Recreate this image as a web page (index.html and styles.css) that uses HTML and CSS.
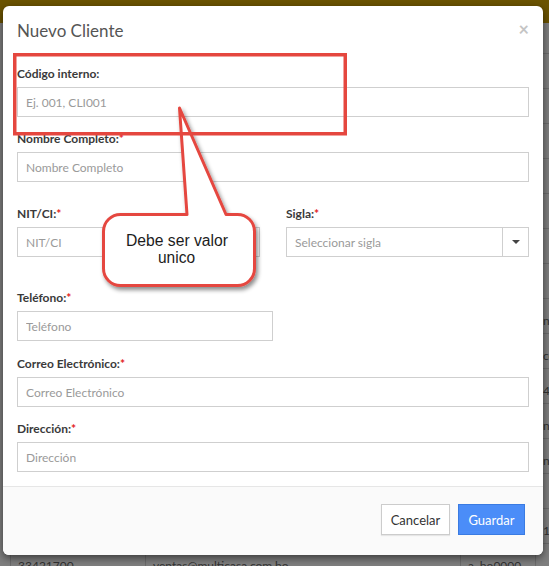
FILE: index.html
```html
<!DOCTYPE html>
<html lang="es">
<head>
<meta charset="utf-8">
<title>Nuevo Cliente</title>
<link rel="stylesheet" href="styles.css">
</head>
<body>
<div class="page">
  <div class="topbar"></div>
  <div class="content">
    <table class="list">
      <colgroup><col class="c1"><col class="c2"><col class="c3"><col class="c4"></colgroup>
      <tbody>
        <tr><td>22345100</td><td>info@empresa.com.bo</td><td>Activo</td><td></td></tr>
        <tr><td>22345101</td><td>info@empresa.com.bo</td><td>Activo</td><td></td></tr>
        <tr><td>22345102</td><td>info@empresa.com.bo</td><td>Activo</td><td></td></tr>
        <tr><td>22345103</td><td>info@empresa.com.bo</td><td>Activo</td><td></td></tr>
        <tr><td>22345104</td><td>info@empresa.com.bo</td><td>Activo</td><td></td></tr>
        <tr><td>22345105</td><td>info@empresa.com.bo</td><td>Activo</td><td></td></tr>
        <tr><td>22345106</td><td>info@empresa.com.bo</td><td>Activo</td><td></td></tr>
        <tr><td>22345107</td><td>info@empresa.com.bo</td><td>Activo</td><td>nit</td></tr>
        <tr><td>22345108</td><td>info@empresa.com.bo</td><td>Activo</td><td>co</td></tr>
        <tr><td>22345109</td><td>info@empresa.com.bo</td><td>Activo</td><td>4:</td></tr>
        <tr><td>22345110</td><td>info@empresa.com.bo</td><td>Activo</td><td>nt</td></tr>
        <tr><td>22345111</td><td>info@empresa.com.bo</td><td>Activo</td><td>nit</td></tr>
        <tr><td>22345112</td><td>info@empresa.com.bo</td><td>Activo</td><td></td></tr>
        <tr><td>22345113</td><td>info@empresa.com.bo</td><td>Activo</td><td>1</td></tr>
        <tr><td>33421700</td><td>ventas@multicasa.com.bo</td><td>a. bo0000</td><td></td></tr>
      </tbody>
    </table>
  </div>
</div>
<div class="backdrop"></div>

<div class="modal">
  <div class="modal-header">
    <h4 class="modal-title">Nuevo Cliente</h4>
    <span class="close">×</span>
  </div>
  <div class="modal-body">
    <div class="group g-codigo">
      <label>Código interno:</label>
      <input class="field" type="text" placeholder="Ej. 001, CLI001">
    </div>
    <div class="group g-nombre">
      <label>Nombre Completo:<span class="req">*</span></label>
      <input class="field" type="text" placeholder="Nombre Completo">
    </div>
    <div class="row">
      <div class="group">
        <label>NIT/CI:<span class="req">*</span></label>
        <input class="field" type="text" placeholder="NIT/CI">
      </div>
      <div class="group">
        <label>Sigla:<span class="req">*</span></label>
        <div class="select">
          <span class="select-text">Seleccionar sigla</span>
          <span class="select-btn"><span class="caret"></span></span>
        </div>
      </div>
    </div>
    <div class="group g-telefono">
      <label>Teléfono:<span class="req">*</span></label>
      <input class="field" type="text" placeholder="Teléfono">
    </div>
    <div class="group g-correo">
      <label>Correo Electrónico:<span class="req">*</span></label>
      <input class="field" type="text" placeholder="Correo Electrónico">
    </div>
    <div class="group g-direccion">
      <label>Dirección:<span class="req">*</span></label>
      <input class="field" type="text" placeholder="Dirección">
    </div>
  </div>
  <div class="modal-footer">
    <button class="btn btn-default" type="button">Cancelar</button>
    <button class="btn btn-primary" type="button">Guardar</button>
  </div>
</div>

<svg class="annot" width="549" height="566" viewBox="0 0 549 566" xmlns="http://www.w3.org/2000/svg">
  <defs>
    <filter id="sh" x="-20%" y="-20%" width="140%" height="140%">
      <feDropShadow dx="2" dy="3" stdDeviation="2" flood-color="#000" flood-opacity="0.45"/>
    </filter>
  </defs>
  <path class="callout" filter="url(#sh)" d="M187 214.5 L179.5 108 L226 214.5 H237 A17 17 0 0 1 254.5 231.5 V268.5 A17 17 0 0 1 237 285.5 H121 A17 17 0 0 1 103.5 268.5 V231.5 A17 17 0 0 1 121 214.5 Z"/>
  <rect class="box" x="14.75" y="54.75" width="330.5" height="79"/>
  <text class="ctext" x="177" y="246" text-anchor="middle" textLength="102" lengthAdjust="spacingAndGlyphs">Debe ser valor</text>
  <text class="ctext" x="176.5" y="263" text-anchor="middle" textLength="37" lengthAdjust="spacingAndGlyphs">unico</text>
</svg>
</body>
</html>
```

FILE: styles.css
```css
* { box-sizing: border-box; }
html, body { margin: 0; padding: 0; }
body {
  width: 549px;
  height: 566px;
  overflow: hidden;
  position: relative;
  background: #fff;
  font-family: Lato, "Open Sans", sans-serif;
}

/* underlying page */
.topbar { height: 23px; background: #d6a600; }
.content { padding-top: 30px; }
.list {
  border-collapse: collapse;
  table-layout: fixed;
  width: 625px;
  margin-left: 10px;
}
.c1 { width: 135px; }
.c2 { width: 315px; }
.c3 { width: 75px; }
.c4 { width: 100px; }
.list td {
  height: 35px;
  border-top: 1px solid #d8d8d8;
  border-left: 1px solid #d8d8d8;
  padding: 15px 7px 0;
  font-size: 12px;
  line-height: 14px;
  color: #666;
  vertical-align: top;
  white-space: nowrap;
  overflow: hidden;
}
.backdrop {
  position: absolute;
  inset: 0;
  background: rgba(0, 0, 0, 0.5);
}

/* modal */
.modal {
  position: absolute;
  left: 3px;
  top: 6px;
  width: 540px;
  background: #fff;
  border-radius: 6px;
  box-shadow: 0 3px 9px rgba(0, 0, 0, 0.55);
  overflow: hidden;
}
.modal-header {
  position: relative;
  padding: 14px 14px 9px;
}
.modal-title {
  margin: 0;
  font-size: 17px;
  line-height: 22px;
  font-weight: 400;
  color: #555;
}
.close {
  position: absolute;
  right: 14px;
  top: 14px;
  font-size: 18px;
  line-height: 18px;
  font-weight: 700;
  color: #c4c4c4;
}
.modal-body { padding: 14px 14px 14px; }

.group { margin-bottom: 13px; }
.g-nombre { margin-bottom: 23px; }
.row {
  display: grid;
  grid-template-columns: 243px 243px;
  column-gap: 26px;
  margin-bottom: 32px;
}
.row .group { margin-bottom: 0; }
.g-telefono { margin-bottom: 14px; }
.g-telefono .field { width: 256px; }
.g-direccion { margin-bottom: 0; }

label {
  display: block;
  font-size: 12px;
  line-height: 17px;
  font-weight: 700;
  color: #3a3a3a;
  margin-bottom: 5px;
}
.req { color: #e31b1b; }

.field {
  display: block;
  width: 100%;
  height: 30px;
  margin: 0;
  border: 1px solid #cfcfcf;
  border-radius: 0;
  padding: 0 8px;
  font-family: Lato, "Open Sans", sans-serif;
  font-size: 12px;
  color: #555;
  background: #fff;
  outline: none;
}
.field::placeholder { color: #9a9a9a; opacity: 1; }

.select {
  display: flex;
  height: 30px;
  border: 1px solid #cfcfcf;
  background: #fff;
}
.select-text {
  flex: 1;
  display: flex;
  align-items: center;
  padding: 0 8px;
  font-size: 12px;
  color: #9a9a9a;
}
.select-btn {
  width: 26px;
  border-left: 1px solid #cfcfcf;
  display: flex;
  align-items: center;
  justify-content: center;
}
.caret {
  width: 0;
  height: 0;
  border-left: 4px solid transparent;
  border-right: 4px solid transparent;
  border-top: 4px solid #444;
}

.modal-footer {
  border-top: 1px solid #e6e6e6;
  background: #fafafa;
  padding: 17px 18px 20px;
  display: flex;
  justify-content: flex-end;
  gap: 8px;
}
.btn {
  height: 31px;
  margin: 0;
  padding: 0;
  font-family: Lato, "Open Sans", sans-serif;
  font-size: 13px;
  border-radius: 0;
  cursor: pointer;
}
.btn-default {
  width: 69px;
  background: #fff;
  border: 1px solid #cccccc;
  color: #333;
  box-shadow: 0 1px 1px rgba(0, 0, 0, 0.08);
}
.btn-primary {
  width: 67px;
  background: #4b8df8;
  border: 1px solid #3a7be2;
  color: #fff;
}

/* annotation overlay */
.annot {
  position: absolute;
  left: 0;
  top: 0;
  pointer-events: none;
}
.callout {
  fill: #fff;
  stroke: #e5473f;
  stroke-width: 3;
  stroke-linejoin: round;
}
.box {
  fill: none;
  stroke: #e5473f;
  stroke-width: 3.5;
}
.ctext {
  font-family: "Liberation Sans", Arial, sans-serif;
  font-size: 16px;
  fill: #1c1c1c;
}
```
